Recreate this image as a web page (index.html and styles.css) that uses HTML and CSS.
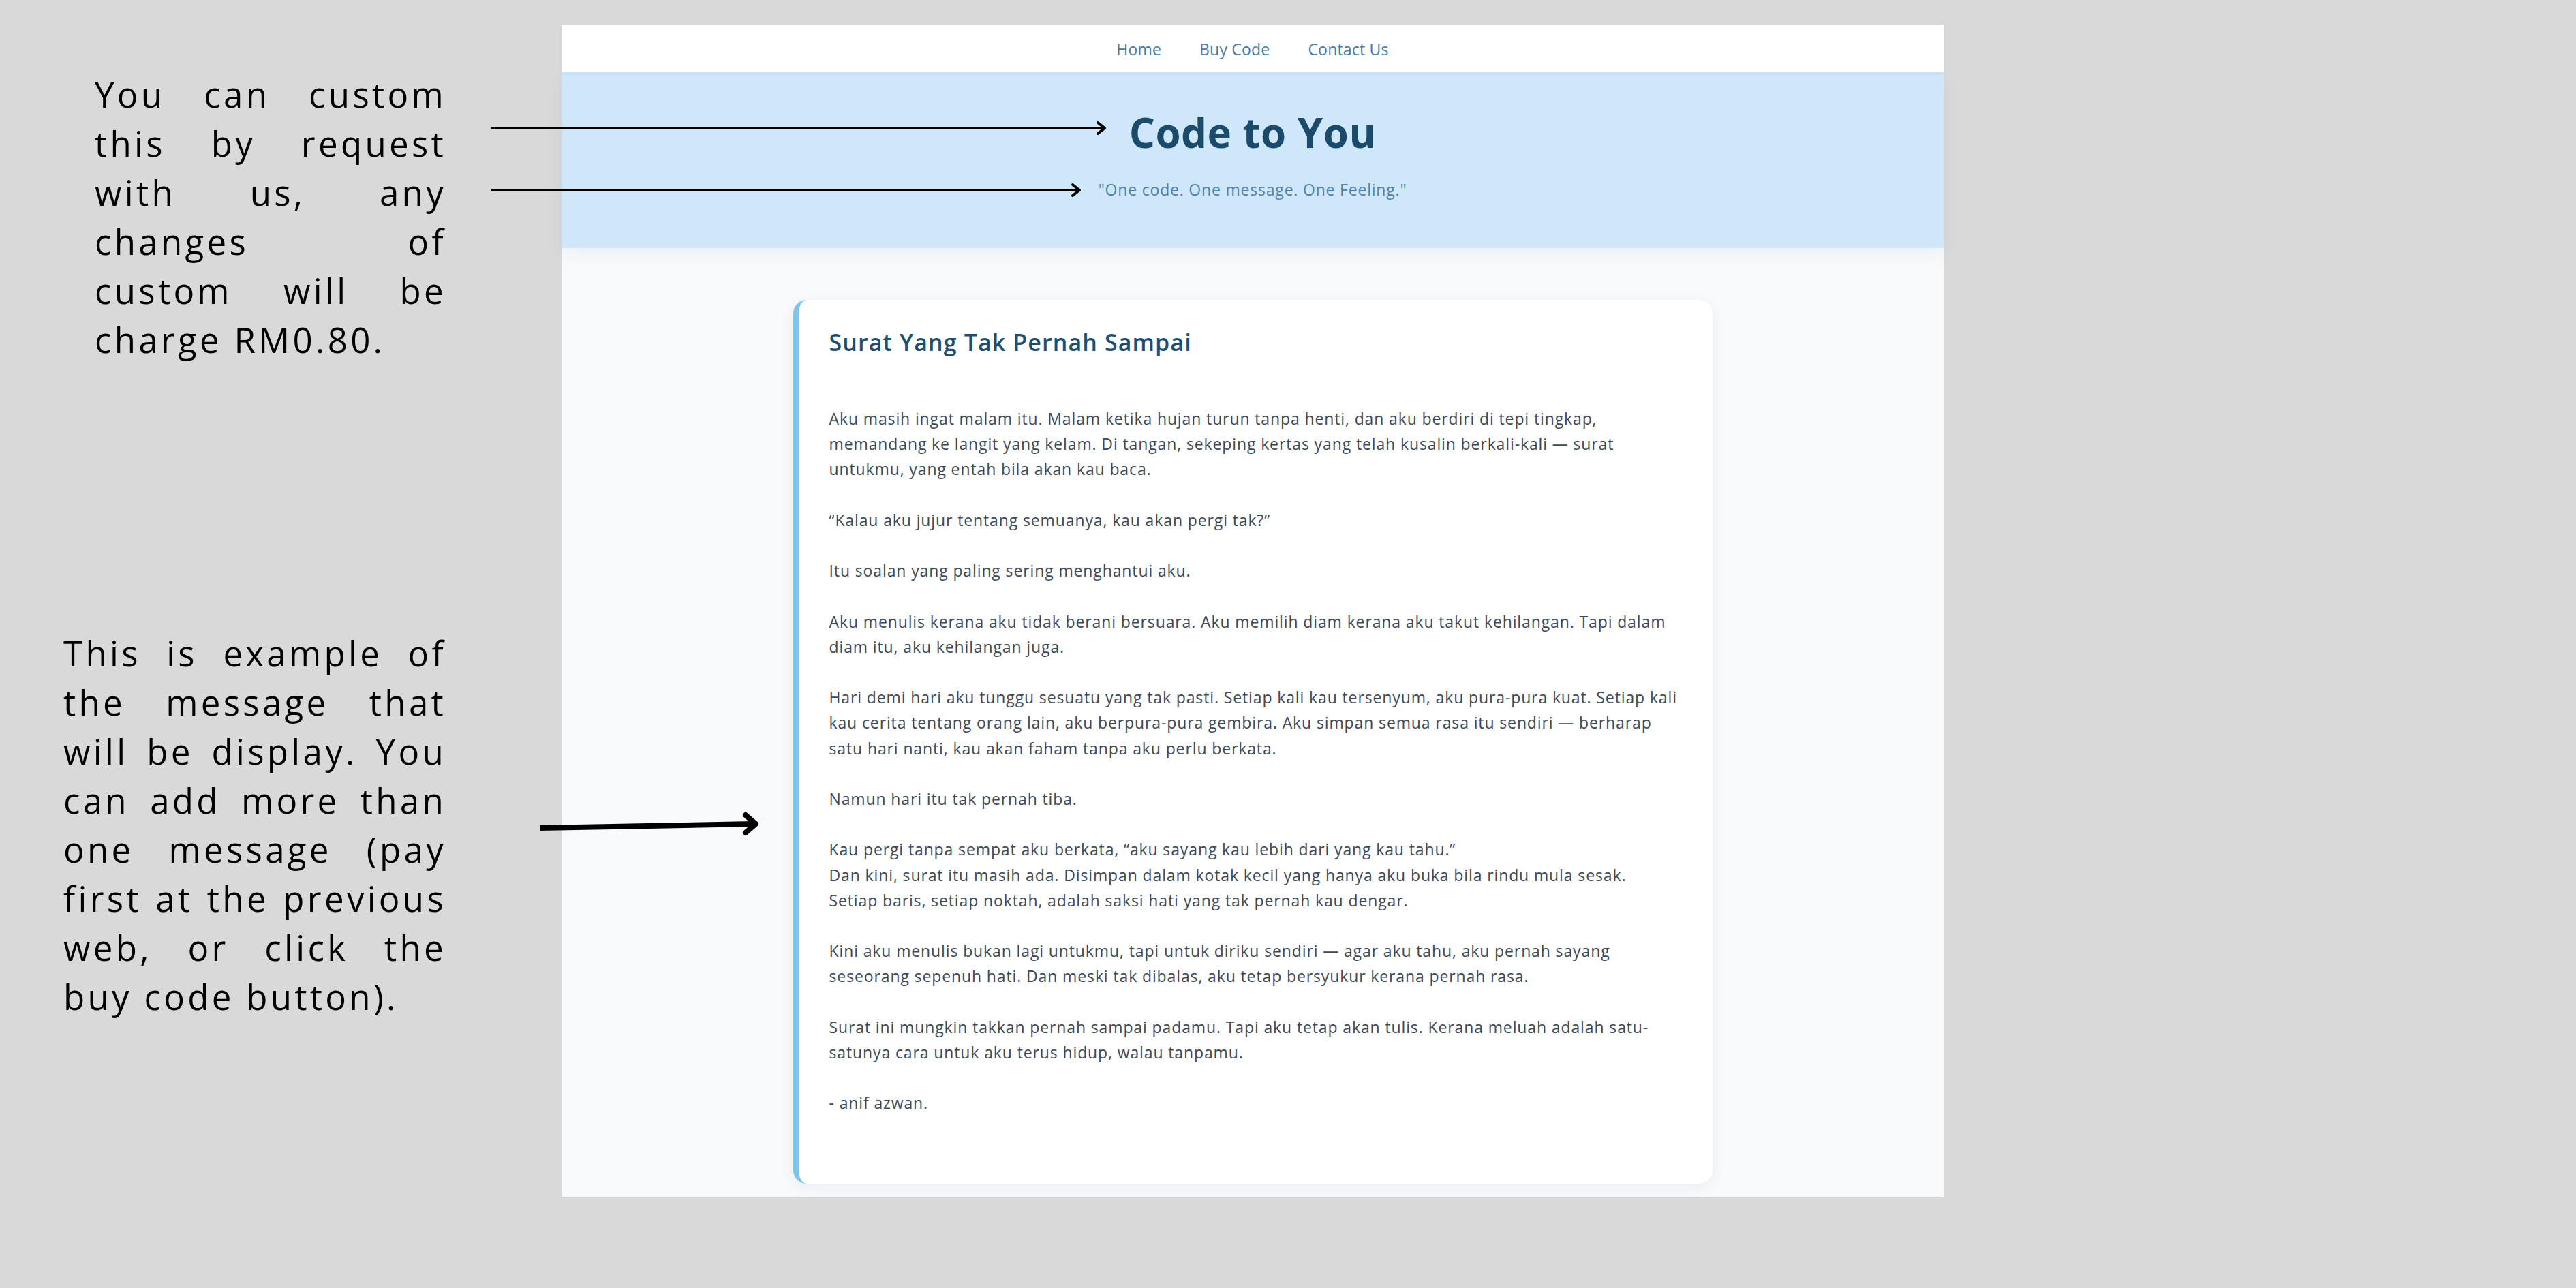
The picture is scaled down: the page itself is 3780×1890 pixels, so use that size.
FILE: index.html
```html
<!DOCTYPE html>
<html lang="ms">
<head>
<meta charset="utf-8">
<title>Code to You</title>
<link rel="stylesheet" href="styles.css">
</head>
<body>
<div class="poster">
  <aside class="notes">
    <p class="note note-custom">
      <span class="ln">You can custom</span>
      <span class="ln">this by request</span>
      <span class="ln">with us, any</span>
      <span class="ln">changes of</span>
      <span class="ln">custom will be</span>
      <span class="ln last">charge RM0.80.</span>
    </p>
    <p class="note note-example">
      <span class="ln">This is example of</span>
      <span class="ln">the message that</span>
      <span class="ln">will be display. You</span>
      <span class="ln">can add more than</span>
      <span class="ln">one message (pay</span>
      <span class="ln">first at the previous</span>
      <span class="ln">web, or click the</span>
      <span class="ln last">buy code button).</span>
    </p>
  </aside>

  <div class="site">
    <nav class="topnav">
      <a href="#">Home</a>
      <a href="#">Buy Code</a>
      <a href="#">Contact Us</a>
    </nav>
    <header class="hero">
      <h1>Code to You</h1>
      <p>"One code. One message. One Feeling."</p>
    </header>
    <main class="content">
      <article class="letter">
        <h2>Surat Yang Tak Pernah Sampai</h2>
        <div class="letter-body">
          <p>Aku masih ingat malam itu. Malam ketika hujan turun tanpa henti, dan aku berdiri di tepi tingkap,<br>memandang ke langit yang kelam. Di tangan, sekeping kertas yang telah kusalin berkali-kali — surat<br>untukmu, yang entah bila akan kau baca.</p>
          <p>“Kalau aku jujur tentang semuanya, kau akan pergi tak?”</p>
          <p>Itu soalan yang paling sering menghantui aku.</p>
          <p>Aku menulis kerana aku tidak berani bersuara. Aku memilih diam kerana aku takut kehilangan. Tapi dalam<br>diam itu, aku kehilangan juga.</p>
          <p>Hari demi hari aku tunggu sesuatu yang tak pasti. Setiap kali kau tersenyum, aku pura-pura kuat. Setiap kali<br>kau cerita tentang orang lain, aku berpura-pura gembira. Aku simpan semua rasa itu sendiri — berharap<br>satu hari nanti, kau akan faham tanpa aku perlu berkata.</p>
          <p>Namun hari itu tak pernah tiba.</p>
          <p>Kau pergi tanpa sempat aku berkata, “aku sayang kau lebih dari yang kau tahu.”<br>Dan kini, surat itu masih ada. Disimpan dalam kotak kecil yang hanya aku buka bila rindu mula sesak.<br>Setiap baris, setiap noktah, adalah saksi hati yang tak pernah kau dengar.</p>
          <p>Kini aku menulis bukan lagi untukmu, tapi untuk diriku sendiri — agar aku tahu, aku pernah sayang<br>seseorang sepenuh hati. Dan meski tak dibalas, aku tetap bersyukur kerana pernah rasa.</p>
          <p>Surat ini mungkin takkan pernah sampai padamu. Tapi aku tetap akan tulis. Kerana meluah adalah satu-<br>satunya cara untuk aku terus hidup, walau tanpamu.</p>
          <p>- anif azwan.</p>
        </div>
      </article>
    </main>
  </div>

  <svg class="arrows" width="3780" height="1890" viewBox="0 0 3780 1890" aria-hidden="true">
    <g fill="none" stroke="#000" stroke-linecap="round" stroke-linejoin="round">
      <line x1="722" y1="188" x2="1619" y2="188" stroke-width="4"/>
      <polyline points="1611,180 1621,188 1611,196" stroke-width="4"/>
      <line x1="722" y1="279" x2="1582" y2="279" stroke-width="4"/>
      <polyline points="1574,271 1584,279 1574,287" stroke-width="4"/>
      <line x1="792" y1="1215" x2="1106" y2="1209" stroke-width="8" stroke-linecap="butt"/>
      <polyline points="1094,1196 1109,1209 1094,1222" stroke-width="8"/>
    </g>
  </svg>
</div>
</body>
</html>
```

FILE: styles.css
```css
html, body {
  margin: 0;
  padding: 0;
}

body {
  width: 3780px;
  height: 1890px;
  overflow: hidden;
  background: #d9d9d9;
  font-family: "Open Sans", "Noto Sans", sans-serif;
}

.poster {
  position: relative;
  display: flex;
  width: 3780px;
  height: 1890px;
  padding-top: 36px;
  box-sizing: border-box;
}

/* Left annotations */
.notes {
  flex: none;
  width: 824px;
  padding-right: 173px;
  box-sizing: border-box;
  display: flex;
  flex-direction: column;
  align-items: flex-end;
}

.note {
  margin: 0;
  font-family: "Open Sans", sans-serif;
  font-size: 51px;
  line-height: 72px;
  letter-spacing: 4.3px;
  font-weight: 400;
  color: #000;
}

.note .ln {
  display: block;
  text-align: justify;
  text-align-last: justify;
  white-space: nowrap;
}

.note .ln.last {
  text-align-last: left;
}

.note-custom {
  width: 516px;
  margin-top: 66px;
  margin-right: -4px;
}

.note-example {
  width: 562px;
  margin-top: 388px;
  margin-right: -4px;
}

/* Website screenshot */
.site {
  flex: none;
  width: 2028px;
  height: 1721px;
  display: flex;
  flex-direction: column;
  background: #f8fafc;
}

.topnav {
  flex: none;
  height: 70px;
  box-sizing: border-box;
  padding-top: 2px;
  background: #fff;
  display: flex;
  justify-content: center;
  align-items: center;
  gap: 56px;
  position: relative;
  z-index: 2;
  box-shadow: 0 2px 6px rgba(0, 0, 0, 0.04);
}

.topnav a {
  font-size: 23px;
  letter-spacing: 0.2px;
  color: #4a7aa5;
  text-decoration: none;
}

.hero {
  flex: none;
  height: 258px;
  box-sizing: border-box;
  padding-top: 52px;
  background: #cfe8f9;
  text-align: center;
  position: relative;
  z-index: 1;
  box-shadow: 0 10px 28px rgba(20, 40, 70, 0.045);
}

.hero h1 {
  margin: 0;
  font-size: 60px;
  line-height: 72px;
  font-weight: 700;
  letter-spacing: 0.5px;
  color: #1b4a6b;
}

.hero p {
  margin: 33px 0 0;
  font-size: 23px;
  line-height: 30px;
  color: #5081aa;
  letter-spacing: 0.8px;
}

.content {
  flex: 1;
  padding-top: 76px;
}

.letter {
  width: 1349px;
  box-sizing: border-box;
  margin: 0 auto;
  padding: 44px 48px 99px 45px;
  background: #fff;
  border-left: 8px solid #7cc6ee;
  border-radius: 20px;
  box-shadow: 0 6px 24px rgba(20, 40, 80, 0.06);
}

.letter h2 {
  margin: 0 0 76px;
  font-size: 34px;
  line-height: 36px;
  font-weight: 600;
  letter-spacing: 1.1px;
  color: #1f4f70;
}

.letter-body p {
  margin: 0 0 37.2px;
  font-size: 23px;
  line-height: 37.2px;
  letter-spacing: 0.88px;
  color: #3e4857;
  white-space: nowrap;
}

.letter-body p:last-child {
  margin-bottom: 0;
}

/* Annotation arrows drawn over the canvas */
.arrows {
  position: absolute;
  top: 0;
  left: 0;
  z-index: 10;
  pointer-events: none;
}
```
